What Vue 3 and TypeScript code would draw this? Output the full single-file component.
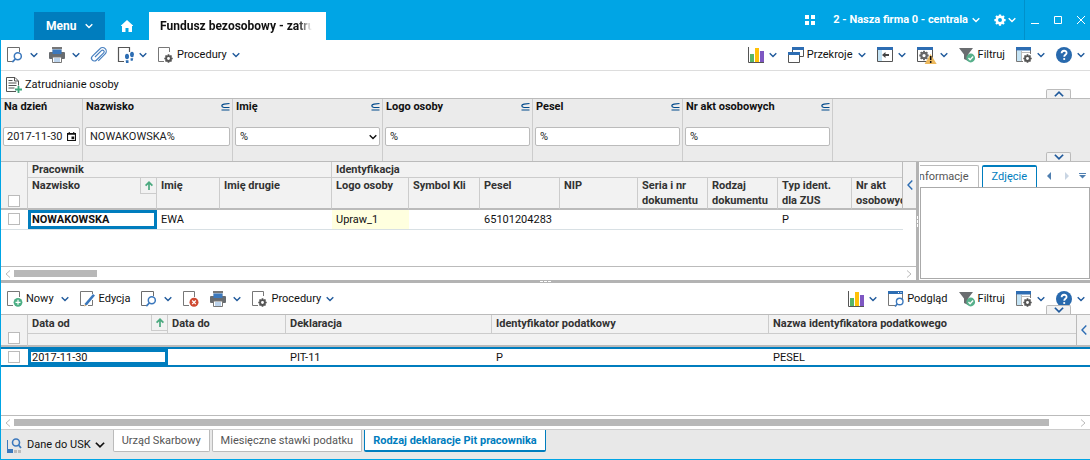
<script setup lang="ts">
import { ref } from 'vue'

interface Tool {
  icon: string
  name: string
  text?: string
  menu?: boolean
  wide?: boolean
}

interface Column {
  title: string
  cls: string
  value: string
}

const mainLeft: Tool[] = [
  { icon: 'find', name: 'Szukaj', menu: true, wide: true },
  { icon: 'print', name: 'Drukuj', menu: true, wide: true },
  { icon: 'clip', name: 'Załączniki' },
  { icon: 'steps', name: 'Przejdź', menu: true },
  { icon: 'proc', name: 'Procedury', text: 'Procedury', menu: true },
]
const mainRight: Tool[] = [
  { icon: 'chart', name: 'Wykresy', menu: true },
  { icon: 'windows', name: 'Przekroje', text: 'Przekroje', menu: true },
  { icon: 'panel', name: 'Panel boczny', menu: true },
  { icon: 'warn', name: 'Ostrzeżenia', menu: true, wide: true },
  { icon: 'filter', name: 'Filtruj', text: 'Filtruj' },
  { icon: 'layout', name: 'Widok', menu: true },
  { icon: 'help', name: 'Pomoc', menu: true },
]
const detailLeft: Tool[] = [
  { icon: 'new', name: 'Nowy', text: 'Nowy', menu: true, wide: true },
  { icon: 'edit', name: 'Edycja', text: 'Edycja' },
  { icon: 'find', name: 'Szukaj', menu: true, wide: true },
  { icon: 'delete', name: 'Usuń' },
  { icon: 'print', name: 'Drukuj', menu: true, wide: true },
  { icon: 'proc', name: 'Procedury', text: 'Procedury', menu: true },
]
const detailRight: Tool[] = [
  { icon: 'chart', name: 'Wykresy', menu: true },
  { icon: 'preview', name: 'Podgląd', text: 'Podgląd' },
  { icon: 'filter', name: 'Filtruj', text: 'Filtruj' },
  { icon: 'layout', name: 'Widok', menu: true },
  { icon: 'help', name: 'Pomoc', menu: true },
]

const filters = ref([
  { id: 'nazwisko', label: 'Nazwisko', value: 'NOWAKOWSKA%', kind: 'text' },
  { id: 'imie', label: 'Imię', value: '%', kind: 'select' },
  { id: 'logo', label: 'Logo osoby', value: '%', kind: 'text' },
  { id: 'pesel', label: 'Pesel', value: '%', kind: 'text' },
  { id: 'akta', label: 'Nr akt osobowych', value: '%', kind: 'text' },
])
const onDay = ref('2017-11-30')

const people: Column[] = [
  { title: 'Nazwisko', cls: 'w129 sorted', value: 'NOWAKOWSKA' },
  { title: 'Imię', cls: 'w63', value: 'EWA' },
  { title: 'Imię drugie', cls: 'w112', value: '' },
  { title: 'Logo osoby', cls: 'w77', value: 'Upraw_1' },
  { title: 'Symbol Kli', cls: 'w71', value: '' },
  { title: 'Pesel', cls: 'w80', value: '65101204283' },
  { title: 'NIP', cls: 'w78', value: '' },
  { title: 'Seria i nr dokumentu', cls: 'w70', value: '' },
  { title: 'Rodzaj dokumentu', cls: 'w70', value: '' },
  { title: 'Typ ident. dla ZUS', cls: 'w74', value: 'P' },
  { title: 'Nr akt osobowych', cls: 'rest', value: '' },
]
const declarations: Column[] = [
  { title: 'Data od', cls: 'w140 sorted', value: '2017-11-30' },
  { title: 'Data do', cls: 'w118', value: '' },
  { title: 'Deklaracja', cls: 'w206', value: 'PIT-11' },
  { title: 'Identyfikator podatkowy', cls: 'w277', value: 'P' },
  { title: 'Nazwa identyfikatora podatkowego', cls: 'rest', value: 'PESEL' },
]
const tabs = ['Urząd Skarbowy', 'Miesięczne stawki podatku', 'Rodzaj deklaracje Pit pracownika']
const activeTab = ref(2)
</script>

<template>
  <div class="app">
    <svg class="sprite" aria-hidden="true">
      <symbol id="chev" viewBox="0 0 8 8"><path d="M.7 2.200L4 5.500l3.300-3.300" fill="none" stroke="currentColor" stroke-width="1.400" /></symbol>
      <symbol id="gear" viewBox="0 0 16 16">
        <path d="M8 .5v4M8 11.500v4M.5 8h4M11.500 8h4M2.700 2.700l2.800 2.800M10.500 10.500l2.800 2.800M13.300 2.700l-2.800 2.800M5.500 10.500l-2.800 2.800" stroke="currentColor" stroke-width="3" />
        <circle cx="8" cy="8" r="4.300" fill="none" stroke="currentColor" stroke-width="3.400" />
      </symbol>
      <symbol id="find" viewBox="0 0 16 16">
        <path d="M12.500 5V.5H.5v14H6" fill="none" stroke="#6b6b6b" />
        <circle cx="10.800" cy="9.300" r="3.500" fill="#fff" stroke="#3b78bd" stroke-width="1.500" />
        <path d="M8.300 12l-3 3.200" stroke="#3b78bd" stroke-width="1.800" />
      </symbol>
      <symbol id="print" viewBox="0 0 16 16">
        <path d="M3 5V1h10v4z" fill="#d4d6d8" /><path d="M3 0h10v2H3z" fill="#777" />
        <rect y="5" width="16" height="7" rx="1" fill="#686c70" />
        <path d="M3.500 2.500h9V7h-9z" fill="#3b78bd" />
        <path d="M3.500 10h9v5.500h-9z" fill="#fff" stroke="#777" /><path d="M5 12h6M5 14h6" stroke="#7ba8d9" />
      </symbol>
      <symbol id="clip" viewBox="0 0 16 16">
        <path d="M4 10l6.400-6.400a1.600 1.600 0 012.300 2.300l-7.400 7.300A2.800 2.800 0 011.400 9.100L9 1.700a3.600 3.600 0 015.200 5.100l-6.900 7" fill="none" stroke="#4981c0" stroke-width="1.200" />
      </symbol>
      <symbol id="steps" viewBox="0 0 16 16">
        <path d="M11.500 5V.5H.5v14H6" fill="none" stroke="#555" stroke-width="1.200" />
        <ellipse cx="9" cy="9.500" rx="2" ry="2.800" fill="#2d6db3" /><ellipse cx="14" cy="7.500" rx="1.900" ry="2.800" fill="#2d6db3" />
        <path d="M7.700 13.200h2.800V16H8zM12.500 11.300h2.700l-.5 2.500h-2z" fill="#2d6db3" />
      </symbol>
      <symbol id="proc" viewBox="0 0 16 16">
        <path d="M11.500 5V.5H.5v14H6" fill="none" stroke="#777" />
        <use href="#gear" x="6" y="7" width="9" height="9" color="#555" />
      </symbol>
      <symbol id="new" viewBox="0 0 16 16">
        <path d="M12.500 6V.5H.5v14H6" fill="none" stroke="#777" />
        <circle cx="11" cy="11.300" r="4.400" fill="#4caf85" /><path d="M8.500 11.300h5M11 8.800v5" stroke="#fff" stroke-width="1.200" />
      </symbol>
      <symbol id="delete" viewBox="0 0 16 16">
        <path d="M11.500 6V.5H.5v14H6" fill="none" stroke="#777" />
        <circle cx="11" cy="11.300" r="4.500" fill="#cf4a32" /><path d="M9.200 9.500l3.600 3.600M12.800 9.500l-3.600 3.600" stroke="#fff" stroke-width="1.300" />
      </symbol>
      <symbol id="edit" viewBox="0 0 16 16">
        <path d="M12.500 3V.5H.5v14H4M12.500 9v5.500H8" fill="none" stroke="#777" />
        <path d="M13 3l2 1.600-7.700 9.200-2.700 1.500.5-3z" fill="#3b78bd" /><path d="M4.300 15.600l.5-2.300 1.600 1.200z" fill="#e8ad62" />
      </symbol>
      <symbol id="chart" viewBox="0 0 16 16">
        <path d="M.5 0v15.500H16" fill="none" stroke="#555" />
        <path d="M2 7h4v8H2z" fill="#58b567" /><path d="M7 1h4v14H7z" fill="#ffc107" /><path d="M12 4h4v11h-4z" fill="#7e57c2" />
      </symbol>
      <symbol id="windows" viewBox="0 0 16 16">
        <path d="M4.500 5V.5h11v9H12" fill="none" stroke="#555" /><path d="M4 0h12v3H4z" fill="#2d6db3" />
        <path d="M.5 6.500h11v9H.5z" fill="#fff" stroke="#555" /><path d="M0 5h12v3H0z" fill="#2d6db3" />
      </symbol>
      <symbol id="panel" viewBox="0 0 16 16">
        <path d="M.5 1.500h15v13H.5z" fill="#fff" stroke="#555" /><path d="M1 3h4v11H1z" fill="#c5e4f5" />
        <path d="M0 0h16v3H0z" fill="#2d6db3" /><path d="M5 8l3.500-3v2H12v2H8.500v2z" fill="#444" />
      </symbol>
      <symbol id="warn" viewBox="0 0 16 16">
        <path d="M.5 1.500h15v13H.5z" fill="#fff" stroke="#555" /><path d="M0 0h16v3H0z" fill="#2d6db3" />
        <use href="#gear" x="2" y="3.500" width="10" height="10" color="#666" />
        <path d="M13.500 7l6.200 10H7.600z" fill="#edb95d" /><path d="M13.700 9v4M13.700 14v2" stroke="#111" stroke-width="1.500" />
      </symbol>
      <symbol id="filter" viewBox="0 0 16 16">
        <path d="M0 1h14L9 7.500V14l-4-2V7.500z" fill="#6a6d70" />
        <circle cx="11.700" cy="11" r="4.400" fill="#57b08b" /><path d="M9.500 11l1.600 1.700 3-3.200" fill="none" stroke="#fff" stroke-width="1.300" />
      </symbol>
      <symbol id="layout" viewBox="0 0 16 16">
        <path d="M7 14.500H.5v-13h14V7" fill="#fff" stroke="#777" /><path d="M1 4h4v10H1z" fill="#c5e4f5" />
        <path d="M0 0h15v3.500H0z" fill="#2d6db3" /><path d="M5 5.500h9M5.500 4v10" stroke="#bbb" />
        <use href="#gear" x="7" y="7" width="9" height="9" color="#555" />
      </symbol>
      <symbol id="preview" viewBox="0 0 16 16">
        <path d="M7 14.500H.5v-13h14V8" fill="#fff" stroke="#777" /><path d="M0 0h15v3H0z" fill="#2d6db3" /><path d="M10 1.500h1M12.500 1.500h1" stroke="#fff" />
        <circle cx="11.700" cy="10.500" r="3.300" fill="#fff" stroke="#3b78bd" stroke-width="1.400" /><path d="M9.300 13l-2.300 2.500" stroke="#3b78bd" stroke-width="1.700" />
      </symbol>
      <symbol id="help" viewBox="0 0 16 16">
        <circle cx="8" cy="8" r="8" fill="#2869ad" />
        <path d="M5.600 6.200c.1-3.200 5-3.200 5-.3 0 1.900-2.400 1.900-2.400 3.800" fill="none" stroke="#fff" stroke-width="1.800" /><circle cx="8.200" cy="12" r="1.100" fill="#fff" />
      </symbol>
      <symbol id="subset" viewBox="0 0 9 8"><path d="M8.500 .5L3 1.200Q.8 1.600.8 2.800T3 4.500h5.500M.5 7h8" fill="none" stroke="#004a8c" stroke-width="1.200" /></symbol>
      <symbol id="sort" viewBox="0 0 8 9"><path d="M4 9V1.500M.6 4.700L4 1.300l3.400 3.400" fill="none" stroke="#4ba97f" stroke-width="1.700" /></symbol>
    </svg>

    <header class="top">
      <button class="menu" type="button">Menu <svg><use href="#chev" /></svg></button>
      <button class="home" type="button" aria-label="Start">
        <svg viewBox="0 0 12 12"><path d="M6 0l6 5.500V6h-1v6H7.500V8h-3v4H1V6H0v-.5z" fill="#fff" /></svg>
      </button>
      <div class="doc-tab"><span>Fundusz bezosobowy - zatrudnienie</span></div>
      <div class="company">
        <svg class="tiles" viewBox="0 0 10 10"><path d="M0 0h4v4H0zM6 0h4v4H6zM0 6h4v4H0zM6 6h4v4H6z" fill="#fff" /></svg>
        <button type="button">2 - Nasza firma 0 - centrala <svg><use href="#chev" /></svg></button>
        <button class="settings" type="button" aria-label="Ustawienia">
          <svg class="cog"><use href="#gear" /></svg><svg><use href="#chev" /></svg>
        </button>
      </div>
      <div class="window">
        <button type="button" aria-label="Minimalizuj"><svg viewBox="0 0 8 8"><path d="M0 7.500h8" /></svg></button>
        <button type="button" aria-label="Maksymalizuj"><svg viewBox="0 0 8 8"><path d="M.5.5h7v7h-7z" /></svg></button>
        <button type="button" aria-label="Zamknij"><svg viewBox="0 0 8 8"><path d="M0 0l8 8M8 0L0 8" /></svg></button>
      </div>
    </header>

    <main class="body">
      <div class="toolbar main-bar">
        <div v-for="(side, s) in [mainLeft, mainRight]" :key="s" class="tools">
          <button v-for="t in side" :key="t.icon" type="button" class="tool" :class="{ wide: t.wide }" :aria-label="t.name">
            <svg class="ico"><use :href="'#' + t.icon" /></svg><span v-if="t.text">{{ t.text }}</span>
            <svg v-if="t.menu" class="chev"><use href="#chev" /></svg>
          </button>
        </div>
      </div>

      <div class="actions">
        <button type="button" class="tool">
          <svg class="ico" viewBox="0 0 16 16">
            <path d="M12.500 8.500V4L9 .5H.5v14H10M8.500 .5V4H12" fill="none" stroke="#555" />
            <path d="M2.500 3.500h4M2.500 6h8M2.500 8.500h8M2.500 11h6" stroke="#555" /><path d="M9 12.500h7M12.500 9v7" stroke="#3ea77c" stroke-width="1.800" />
          </svg><span>Zatrudnianie osoby</span>
        </button>
        <button type="button" class="fold" aria-label="Zwiń"><svg class="up"><use href="#chev" /></svg></button>
      </div>

      <form class="filters" @submit.prevent>
        <div class="field day">
          <label for="f-day">Na dzień</label>
          <div class="date">
            <input id="f-day" v-model="onDay" type="text" />
            <button type="button" aria-label="Kalendarz">
              <svg viewBox="0 0 10 10"><path d="M.6 1.600h8.800v7.800H.6zM.5 2.500h9M2.500 0v2M7.500 0v2" fill="none" stroke="#111" stroke-width="1.200" /><path d="M5 5h3v3H5z" fill="#111" /></svg>
            </button>
          </div>
        </div>
        <div v-for="f in filters" :key="f.id" class="field">
          <label :for="'f-' + f.id">{{ f.label }} <svg><use href="#subset" /></svg></label>
          <div v-if="f.kind === 'select'" class="pick">
            <select :id="'f-' + f.id" v-model="f.value"><option>%</option></select>
            <svg><use href="#chev" /></svg>
          </div>
          <input v-else :id="'f-' + f.id" v-model="f.value" type="text" />
        </div>
        <button type="button" class="fold" aria-label="Rozwiń"><svg><use href="#chev" /></svg></button>
      </form>

      <div class="upper">
        <section class="grid">
          <div class="sheet">
            <table class="people">
              <colgroup>
                <col class="w27" />
                <col v-for="c in people" :key="c.title" :class="c.cls" />
              </colgroup>
              <thead>
                <tr class="groups">
                  <th rowspan="2" class="mark"><input type="checkbox" aria-label="Zaznacz wszystkie" /></th>
                  <th colspan="3">Pracownik</th>
                  <th colspan="8">Identyfikacja</th>
                </tr>
                <tr class="titles">
                  <th v-for="c in people" :key="c.title" :class="c.cls">
                    {{ c.title }}
                    <span v-if="c.cls.includes('sorted')" class="sort"><svg><use href="#sort" /></svg></span>
                  </th>
                </tr>
              </thead>
              <tbody>
                <tr>
                  <td class="mark"><input type="checkbox" aria-label="Zaznacz wiersz" /></td>
                  <td v-for="(c, i) in people" :key="c.title" :class="{ focus: i === 0, strong: i === 0, soft: i === 3 }">{{ c.value }}</td>
                </tr>
              </tbody>
            </table>
            <button type="button" class="side-fold" aria-label="Pokaż"><svg viewBox="0 0 6 10"><path d="M5.300 .5L1 5l4.300 4.500" /></svg></button>
          </div>
          <div class="scroll">
            <svg viewBox="0 0 6 8"><path d="M5 .5L1 4l4 3.500" /></svg>
            <div class="track"><i class="thumb short"></i></div>
            <svg viewBox="0 0 6 8"><path d="M1 .5L5 4 1 7.500" /></svg>
          </div>
        </section>
        <div class="vsplit"><i></i><i></i><i></i></div>
        <aside class="side">
          <div class="side-head">
            <div class="side-tabs">
              <button type="button">Informacje</button>
              <button type="button" class="on">Zdjęcie</button>
            </div>
            <svg viewBox="0 0 40 10">
              <path d="M5 1v8L1 5z" fill="#4f7fb0" /><path d="M19 1v8l4-4z" fill="#c9d5e3" />
              <path d="M33 2.500h7" stroke="#4f7fb0" /><path d="M33 4h7L36.500 7.500z" fill="#4f7fb0" />
            </svg>
          </div>
          <div class="photo"></div>
        </aside>
      </div>
      <div class="hsplit"><i></i><i></i><i></i></div>

      <div class="toolbar detail-bar">
        <div v-for="(side, s) in [detailLeft, detailRight]" :key="s" class="tools">
          <button v-for="t in side" :key="t.icon" type="button" class="tool" :class="{ wide: t.wide }" :aria-label="t.name">
            <svg class="ico"><use :href="'#' + t.icon" /></svg><span v-if="t.text">{{ t.text }}</span>
            <svg v-if="t.menu" class="chev"><use href="#chev" /></svg>
          </button>
        </div>
        <button type="button" class="fold" aria-label="Rozwiń"><svg><use href="#chev" /></svg></button>
      </div>

      <section class="grid lower">
        <div class="sheet">
          <table class="declarations">
            <colgroup>
              <col class="w27" />
              <col v-for="c in declarations" :key="c.title" :class="c.cls" />
            </colgroup>
            <thead>
              <tr class="titles">
                <th rowspan="2" class="mark"><input type="checkbox" aria-label="Zaznacz wszystkie" /></th>
                <th v-for="c in declarations" :key="c.title" :class="c.cls">
                  {{ c.title }}
                  <span v-if="c.cls.includes('sorted')" class="sort"><svg><use href="#sort" /></svg></span>
                </th>
              </tr>
              <tr class="spare"><th colspan="5"></th></tr>
            </thead>
            <tbody>
              <tr class="current">
                <td class="mark"><input type="checkbox" aria-label="Zaznacz wiersz" /></td>
                <td v-for="(c, i) in declarations" :key="c.title" :class="{ focus: i === 0 }">{{ c.value }}</td>
              </tr>
            </tbody>
          </table>
          <button type="button" class="side-fold" aria-label="Pokaż"><svg viewBox="0 0 6 10"><path d="M5.300 .5L1 5l4.300 4.500" /></svg></button>
        </div>
        <div class="scroll">
          <svg viewBox="0 0 6 8"><path d="M5 .5L1 4l4 3.500" /></svg>
          <div class="track"><i class="thumb long"></i></div>
          <svg viewBox="0 0 6 8"><path d="M1 .5L5 4 1 7.500" /></svg>
        </div>
      </section>

      <footer class="bottom">
        <button type="button" class="tool usk">
          <svg class="ico" viewBox="0 0 16 16">
            <path d="M.5 3v13" stroke="#3b78bd" /><path d="M0 12h6v4H0z" fill="#3b78bd" /><path d="M7 13h3v3H7zM11 13h3v3h-3z" fill="#bbb" />
            <circle cx="9" cy="5.500" r="3.500" fill="none" stroke="#3b78bd" stroke-width="1.600" /><path d="M11.500 8l2.500 3" stroke="#3b78bd" stroke-width="1.800" />
          </svg>
          <span>Dane do USK</span><svg class="arrow"><use href="#chev" /></svg>
        </button>
        <nav class="tabs">
          <button v-for="(t, i) in tabs" :key="t" type="button" :class="{ on: i === activeTab }" @click="activeTab = i">{{ t }}</button>
        </nav>
      </footer>
    </main>
  </div>
</template>

<style>
html,
body,
#app {
  height: 100%;
}
body {
  margin: 0;
}
</style>

<style scoped>
.app,
.app * {
  box-sizing: border-box;
}
.app {
  display: flex;
  flex-direction: column;
  height: 100%;
  overflow: hidden;
  font: 11px/16px Roboto, 'Liberation Sans', sans-serif;
  color: #111;
  background: #fff;
}
.sprite {
  position: absolute;
  width: 0;
  height: 0;
}
svg {
  flex: none;
  overflow: visible;
}
symbol {
  overflow: visible;
}
button {
  display: flex;
  align-items: center;
  padding: 0;
  border: 0;
  background: none;
  font: inherit;
  color: inherit;
  white-space: nowrap;
}

.top {
  display: flex;
  flex: none;
  align-items: flex-end;
  height: 40px;
  padding-left: 34px;
  background: #00a5e5;
  color: #fff;
  font-size: 12px;
  font-weight: 700;
}
.top button svg {
  width: 8px;
  height: 8px;
}
.menu {
  justify-content: space-between;
  width: 71px;
  height: 28px;
  padding: 0 12px;
  background: #007dbe;
}
.home {
  justify-content: center;
  width: 44px;
  height: 28px;
}
.top .home svg {
  width: 12px;
  height: 12px;
}
.doc-tab {
  width: 177px;
  height: 28px;
  padding: 0 14px 0 11px;
  background: #fff;
  color: #111;
  line-height: 28px;
}
.doc-tab span {
  display: block;
  overflow: hidden;
  white-space: nowrap;
  mask-image: linear-gradient(to right, #000 138px, transparent 152px);
}
.company {
  display: flex;
  align-items: center;
  align-self: stretch;
  gap: 14px;
  margin-left: auto;
  padding-right: 8px;
  border-right: 1px solid #0090ca;
  font-size: 11px;
}
.company button {
  gap: 4px;
}
.tiles {
  width: 10px;
  height: 10px;
  margin-right: 4px;
}
.company .settings {
  gap: 2px;
}
.company .settings .cog {
  width: 12px;
  height: 12px;
}
.window {
  display: flex;
  align-items: center;
  align-self: stretch;
  gap: 15px;
  padding: 0 5px 0 6px;
}
.window svg {
  fill: none;
  stroke: #fff;
}

.body {
  display: flex;
  flex: 1;
  flex-direction: column;
  min-height: 0;
  border-left: 1px solid #00a5e5;
  border-bottom: 1px solid #00a5e5;
}
.toolbar {
  position: relative;
  display: flex;
  flex: none;
  justify-content: space-between;
  height: 31px;
  padding: 0 5px 0 6px;
}
.main-bar {
  border-bottom: 1px solid #ddd;
}
.detail-bar {
  height: 32px;
  border-bottom: 1px solid #bbb;
}
.tools {
  display: flex;
  align-items: center;
  gap: 11px;
}
.tool span {
  margin-left: 3px;
}
.ico {
  width: 16px;
  height: 16px;
}
.chev {
  width: 8px;
  height: 8px;
  margin-left: 5px;
  color: #205a9c;
}
.wide .chev {
  margin-left: 7px;
}
.actions {
  position: relative;
  display: flex;
  flex: none;
  height: 28px;
  padding-left: 5px;
  border-bottom: 1px solid #bbb;
}
.fold {
  position: absolute;
  right: 19px;
  bottom: 0;
  justify-content: center;
  width: 25px;
  height: 9px;
  border: 1px solid #bbb;
  border-bottom: 0;
  border-radius: 2px 2px 0 0;
  background: #f2f2f2;
  color: #205a9c;
}
.fold svg {
  width: 10px;
  height: 10px;
}
.up {
  transform: rotate(180deg);
}

.filters {
  position: relative;
  display: flex;
  flex: none;
  height: 63px;
  border-bottom: 1px solid #bbb;
  background: #ebebeb;
}
.field {
  width: 150px;
  padding: 0 2px;
  border-right: 1px solid #ccc;
}
.field.day {
  width: 82px;
}
.field label {
  display: flex;
  align-items: center;
  justify-content: space-between;
  height: 16px;
  margin-bottom: 12px;
  padding-left: 1px;
  font-weight: 700;
}
.field label svg {
  width: 9px;
  height: 8px;
}
.field input,
.field select,
.date {
  width: 100%;
  height: 19px;
  margin: 0;
  padding: 0 4px;
  border: 1px solid #bbb;
  border-radius: 2px;
  background: #fff;
  font: inherit;
  color: #222;
  outline: 0;
}
.date {
  display: flex;
  align-items: center;
  padding: 0 3px;
}
.date input {
  flex: 1;
  min-width: 0;
  height: 16px;
  padding: 0;
  border: 0;
}
.date svg {
  width: 9px;
  height: 9px;
}
.pick {
  position: relative;
}
.field select {
  appearance: none;
}
.pick svg {
  position: absolute;
  top: 6px;
  right: 3px;
  width: 8px;
  height: 8px;
  pointer-events: none;
}

.upper {
  display: flex;
  flex: 118 1 118px;
  min-height: 0;
}
.grid {
  display: flex;
  flex: 1;
  flex-direction: column;
  min-width: 0;
}
.lower {
  flex: 114 1 114px;
  min-height: 0;
}
.sheet {
  position: relative;
  flex: 1;
  min-height: 0;
  overflow: hidden;
}
table {
  width: 100%;
  border-collapse: separate;
  border-spacing: 0;
  table-layout: fixed;
}
.w27 { width: 27px; }
.w63 { width: 63px; }
.w70 { width: 70px; }
.w71 { width: 71px; }
.w74 { width: 74px; }
.w77 { width: 77px; }
.w78 { width: 78px; }
.w80 { width: 80px; }
.w112 { width: 112px; }
.w118 { width: 118px; }
.w129 { width: 129px; }
.w140 { width: 140px; }
.w206 { width: 206px; }
.w277 { width: 277px; }
th {
  position: relative;
  padding: 0 4px;
  border-right: 1px solid #ccc;
  border-bottom: 1px solid #ccc;
  background: #f2f2f2;
  color: #333;
  font-weight: 700;
  text-align: left;
  vertical-align: top;
  overflow: hidden;
}
.people th {
  height: 16px;
  line-height: 15px;
}
.people .titles th {
  height: 32px;
  border-bottom: 2px solid #bbb;
}
.people th.mark,
.declarations th.mark {
  border-bottom: 2px solid #bbb;
  vertical-align: bottom;
}
.mark {
  padding: 0;
  text-align: center;
}
.mark input {
  display: block;
  width: 12px;
  height: 12px;
  margin: 0 auto 1px 7px;
  border: 1px solid #bbb;
  background: #fff;
  appearance: none;
}
td {
  height: 20px;
  padding: 0 4px;
  border-bottom: 1px solid #d8e0e4;
  line-height: 15px;
  white-space: nowrap;
}
td.mark {
  padding: 0;
}
.strong {
  font-weight: 700;
}
.soft {
  background: #ffffdf;
}
.focus {
  position: relative;
}
.focus::after {
  content: '';
  position: absolute;
  inset: 0;
  border: 3px solid #007dbe;
}
.sort {
  position: absolute;
  top: 0;
  right: 0;
  display: flex;
  justify-content: center;
  align-items: center;
  width: 16px;
  height: 16px;
  border: solid #ccc;
  border-width: 0 0 1px 1px;
}
.sort svg {
  width: 8px;
  height: 9px;
}
.declarations .titles th {
  height: 19px;
  line-height: 18px;
}
.declarations .spare th {
  height: 13px;
  padding: 0;
  border-bottom: 2px solid #bbb;
}
.current td {
  border-top: 2px solid #007dbe;
  border-bottom: 2px solid #007dbe;
}
.side-fold {
  position: absolute;
  top: 0;
  right: 0;
  justify-content: center;
  width: 14px;
  height: 48px;
  border-left: 1px solid #bbb;
  border-bottom: 2px solid #bbb;
  background: #f2f2f2;
}
.people {
  width: calc(100% - 13px);
}
.side-fold svg {
  width: 6px;
  height: 10px;
  fill: none;
  stroke: #2d6db3;
  stroke-width: 1.4;
}
.lower .side-fold {
  height: 32px;
}
.scroll {
  display: flex;
  flex: none;
  align-items: center;
  gap: 3px;
  height: 14px;
  padding: 0 4px;
  border-top: 1px solid #bbb;
}
.scroll svg {
  width: 6px;
  height: 8px;
  fill: none;
  stroke: #bbb;
}
.track {
  flex: 1;
}
.thumb {
  display: block;
  height: 7px;
  background: #b8b8b8;
}
.short {
  width: 83px;
}
.long {
  width: calc(100% - 28px);
}
.vsplit,
.hsplit {
  display: flex;
  flex: none;
  justify-content: center;
  align-items: center;
  gap: 1px;
  background: #b3b3b3;
}
.vsplit {
  flex-direction: column;
  width: 3px;
}
.hsplit {
  height: 3px;
}
.vsplit i {
  width: 1px;
  height: 3px;
  background: #fff;
}
.hsplit i {
  width: 3px;
  height: 1px;
  background: #fff;
}
.side {
  display: flex;
  flex: none;
  flex-direction: column;
  width: 171px;
  padding: 3px 0 1px 1px;
}
.side-head {
  display: flex;
  align-items: center;
  gap: 9px;
  height: 22px;
  padding-right: 4px;
}
.side-head > svg {
  width: 40px;
  height: 10px;
}
.side-tabs {
  display: flex;
  flex: 1;
  justify-content: flex-end;
  gap: 3px;
  min-width: 0;
  overflow: hidden;
}
.side-tabs button {
  flex: none;
  height: 22px;
  padding: 0 9px;
  border: 1px solid #bbb;
  border-bottom: 0;
  border-radius: 2px 2px 0 0;
  color: #555;
}
.side-tabs .on {
  border-color: #007dbe;
  border-top-width: 2px;
  color: #007dbe;
}
.photo {
  flex: 1;
  border: 1px solid #aaa;
}

.bottom {
  display: flex;
  flex: none;
  height: 30px;
  padding-left: 6px;
  border-top: 1px solid #ccc;
  background: #e8e8e8;
}
.usk span {
  margin-left: 4px;
}
.arrow {
  width: 10px;
  height: 10px;
  margin: 0 8px 0 4px;
}
.tabs {
  display: flex;
  align-items: flex-start;
  gap: 2px;
}
.tabs button {
  height: 22px;
  padding: 1px 8px 0;
  border: 1px solid #bbb;
  border-top: 0;
  border-radius: 0 0 2px 2px;
  background: #fff;
  color: #555;
}
.tabs .on {
  border-color: #007dbe;
  border-bottom-width: 2px;
  color: #007dbe;
  font-weight: 700;
}
</style>
